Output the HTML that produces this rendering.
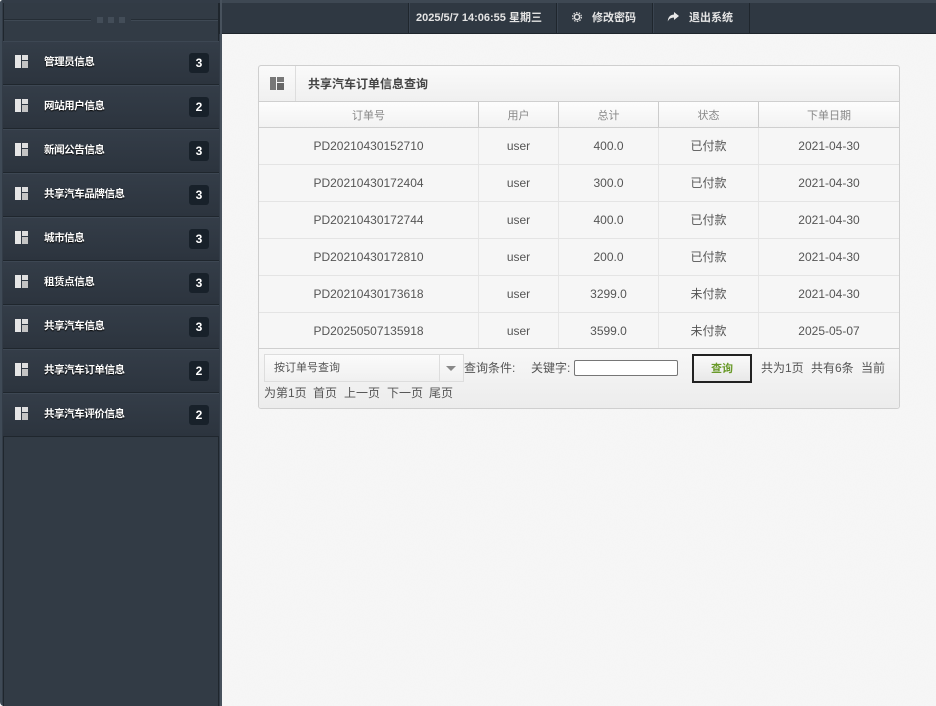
<!DOCTYPE html>
<html><head><meta charset="utf-8"><style>
*{box-sizing:border-box}
html,body{margin:0;padding:0}
body{width:936px;height:706px;position:relative;overflow:hidden;background:#f4f4f4;font-family:"Liberation Sans","Noto Sans CJK SC",sans-serif;font-size:12px;color:#555}
div,span.a{position:absolute}
.menu{left:3px;width:216px;height:44px;background:linear-gradient(#343d48,#2c343e);border-top:1px solid #3d4753;border-bottom:1px solid #1f262d}
.menu .t{left:41px;top:12px;color:#fff;font-size:10.5px;font-weight:bold;letter-spacing:-.42px;white-space:nowrap;text-shadow:0 1px 1px #000;line-height:16px}
.badge{left:186px;top:11px;width:20px;height:20px;border-radius:3px;background:#18212a;color:#fff;font-weight:bold;font-size:12px;text-align:center;line-height:21px}
.ic{width:13px;height:13px}
.ic i{position:absolute;background:#e6e6e6;display:block}
.ic .x{left:0;top:0;width:6px;height:13px}
.ic .y{left:7px;top:0;width:6px;height:5px;background:#dedede}
.ic .z{left:7px;top:6px;width:6px;height:7px;background:#c4c4c4}
.dark{width:14px;height:13px}
.dark i{background:#777}
.dark .y{width:7px;background:#777}.dark .z{width:7px;height:7px;background:#666}
.tb{border-left:1px solid #1f262d;box-shadow:inset 1px 0 0 #3a4450;top:3px;height:30px;color:#e4e4e4;font-size:11px;font-weight:bold;line-height:31px;white-space:nowrap}
.h{position:absolute;height:26px;top:102px;line-height:28px;color:#888;font-size:11px;text-align:center;border-right:1px solid #ccc;background:linear-gradient(#fdfdfd,#f2f2f2)}
.row{position:absolute;left:259px;width:640px;height:37px;border-bottom:1px solid #e4e4e4;background:#f6f6f6}
.row span{position:absolute;top:0;height:36px;line-height:36px;text-align:center;border-right:1px solid #e6e6e6;color:#555;white-space:nowrap}
.s1{left:0;width:220px}.s2{left:220px;width:80px}.s3{left:300px;width:100px}.s4{left:400px;width:100px}.s5{left:500px;width:140px;border-right:0!important}
.f{position:absolute;white-space:nowrap;line-height:16px;color:#555}
</style></head><body>
<div style="left:0;top:0;width:936px;height:34px;background:#2f3842;border-bottom:1px solid #1e252c;border-radius:3px 0 0 0"></div>
<div style="left:0;top:0;width:936px;height:3px;background:#3e4853;border-radius:3px 0 0 0"></div>
<div style="left:0;top:0;width:222px;height:706px;background:#333c47;border-left:2px solid #3f4a56;border-right:2px solid #48525d;border-radius:3px 0 0 4px"></div>
<div style="left:3px;top:3px;width:216px;height:703px;background:#323b45;border-left:1px solid #1f262d;border-right:1px solid #1f262d"></div>
<div style="left:219px;top:3px;width:1px;height:31px;background:#1f262d"></div>
<div style="left:4px;top:19px;width:87px;height:2px;background:#252d35;border-bottom:1px solid #3f4954"></div>
<div style="left:131px;top:19px;width:87px;height:2px;background:#252d35;border-bottom:1px solid #3f4954"></div>
<div style="left:97px;top:17px;width:6px;height:6px;background:#434d58"></div>
<div style="left:108px;top:17px;width:6px;height:6px;background:#434d58"></div>
<div style="left:119px;top:17px;width:6px;height:6px;background:#434d58"></div>

<div class="menu" style="top:41px"><div class="ic" style="left:12px;top:13px"><i class="x"></i><i class="y"></i><i class="z"></i></div><div class="t">管理员信息</div><div class="badge">3</div></div>
<div class="menu" style="top:85px"><div class="ic" style="left:12px;top:13px"><i class="x"></i><i class="y"></i><i class="z"></i></div><div class="t">网站用户信息</div><div class="badge">2</div></div>
<div class="menu" style="top:129px"><div class="ic" style="left:12px;top:13px"><i class="x"></i><i class="y"></i><i class="z"></i></div><div class="t">新闻公告信息</div><div class="badge">3</div></div>
<div class="menu" style="top:173px"><div class="ic" style="left:12px;top:13px"><i class="x"></i><i class="y"></i><i class="z"></i></div><div class="t">共享汽车品牌信息</div><div class="badge">3</div></div>
<div class="menu" style="top:217px"><div class="ic" style="left:12px;top:13px"><i class="x"></i><i class="y"></i><i class="z"></i></div><div class="t">城市信息</div><div class="badge">3</div></div>
<div class="menu" style="top:261px"><div class="ic" style="left:12px;top:13px"><i class="x"></i><i class="y"></i><i class="z"></i></div><div class="t">租赁点信息</div><div class="badge">3</div></div>
<div class="menu" style="top:305px"><div class="ic" style="left:12px;top:13px"><i class="x"></i><i class="y"></i><i class="z"></i></div><div class="t">共享汽车信息</div><div class="badge">3</div></div>
<div class="menu" style="top:349px"><div class="ic" style="left:12px;top:13px"><i class="x"></i><i class="y"></i><i class="z"></i></div><div class="t">共享汽车订单信息</div><div class="badge">2</div></div>
<div class="menu" style="top:393px"><div class="ic" style="left:12px;top:13px"><i class="x"></i><i class="y"></i><i class="z"></i></div><div class="t">共享汽车评价信息</div><div class="badge">2</div></div>

<div class="tb" style="left:408px;width:148px;padding-left:7px">2025/5/7 14:06:55 星期三</div>
<div class="tb" style="left:556px;width:96px;padding-left:35px">修改密码</div>
<div class="tb" style="left:652px;width:97px;padding-left:36px">退出系统</div>
<div style="left:749px;top:3px;width:1px;height:30px;background:#1f262d"></div>
<svg style="position:absolute;left:571px;top:11px" width="12" height="12" viewBox="0 0 12 12"><circle cx="6" cy="6" r="2.6" fill="none" stroke="#e0e0e0" stroke-width="1.5"/><circle cx="6" cy="6" r="4.4" fill="none" stroke="#d8d8d8" stroke-width="1.3" stroke-dasharray="1.5 1.3"/></svg>
<svg style="position:absolute;left:667px;top:11px" width="12" height="12" viewBox="0 0 12 12"><path d="M7 1l5 4-5 4V6.6C4 6.6 2 7.6 .8 10.5.8 6.5 3 3.8 7 3.5z" fill="#e8e8e8"/></svg>

<div style="left:222px;top:34px;width:714px;height:672px;background:#f7f7f7"></div>
<svg style="position:absolute;left:222px;top:34px" width="714" height="672"><filter id="n"><feTurbulence type="fractalNoise" baseFrequency="0.9" numOctaves="2"/><feColorMatrix values="0 0 0 0 0.6 0 0 0 0 0.6 0 0 0 0 0.6 0 0 0 0.07 0"/></filter><rect width="714" height="672" filter="url(#n)"/></svg>

<div style="left:258px;top:65px;width:642px;height:344px;background:#f3f3f3;border:1px solid #cfcfcf;border-radius:3px"></div>
<div style="left:259px;top:66px;width:640px;height:36px;background:linear-gradient(#fafafa,#f0f0f0);border-bottom:1px solid #cfcfcf;border-radius:3px 3px 0 0"></div>
<div style="left:295px;top:66px;width:1px;height:35px;background:#ddd"></div>
<div class="ic dark" style="left:270px;top:77px"><i class="x"></i><i class="y"></i><i class="z"></i></div>
<div style="left:308px;top:75px;color:#444;font-size:12px;font-weight:bold;line-height:18px;white-space:nowrap;letter-spacing:0">共享汽车订单信息查询</div>

<div style="left:259px;top:102px;width:640px;height:26px;background:#f5f5f5;border-bottom:1px solid #cfcfcf;z-index:1"></div>
<div class="h" style="left:259px;width:220px;z-index:2">订单号</div>
<div class="h" style="left:479px;width:80px;z-index:2">用户</div>
<div class="h" style="left:559px;width:100px;z-index:2">总计</div>
<div class="h" style="left:659px;width:100px;z-index:2">状态</div>
<div class="h" style="left:759px;width:140px;border-right:0;z-index:2">下单日期</div>
<div style="left:259px;top:127px;width:640px;height:1px;background:#cfcfcf;z-index:3"></div>

<div class="row" style="top:128px"><span class="s1">PD20210430152710</span><span class="s2">user</span><span class="s3">400.0</span><span class="s4">已付款</span><span class="s5">2021-04-30</span></div>
<div class="row" style="top:165px"><span class="s1">PD20210430172404</span><span class="s2">user</span><span class="s3">300.0</span><span class="s4">已付款</span><span class="s5">2021-04-30</span></div>
<div class="row" style="top:202px"><span class="s1">PD20210430172744</span><span class="s2">user</span><span class="s3">400.0</span><span class="s4">已付款</span><span class="s5">2021-04-30</span></div>
<div class="row" style="top:239px"><span class="s1">PD20210430172810</span><span class="s2">user</span><span class="s3">200.0</span><span class="s4">已付款</span><span class="s5">2021-04-30</span></div>
<div class="row" style="top:276px"><span class="s1">PD20210430173618</span><span class="s2">user</span><span class="s3">3299.0</span><span class="s4">未付款</span><span class="s5">2021-04-30</span></div>
<div class="row" style="top:313px;height:36px;border-bottom:1px solid #cfcfcf"><span class="s1" style="height:35px;line-height:37px">PD20250507135918</span><span class="s2" style="height:35px;line-height:37px">user</span><span class="s3" style="height:35px;line-height:37px">3599.0</span><span class="s4" style="height:35px;line-height:37px">未付款</span><span class="s5" style="height:35px;line-height:37px">2025-05-07</span></div>

<div style="left:259px;top:349px;width:640px;height:59px;background:linear-gradient(#f7f7f7,#ececec);border-radius:0 0 3px 3px"></div>
<div style="left:264px;top:354px;width:200px;height:28px;background:linear-gradient(#fbfbfb,#f0f0f0);border:1px solid #ddd"></div>
<div style="left:439px;top:355px;width:1px;height:26px;background:#ddd"></div>
<div style="left:446px;top:366px;width:0;height:0;border-left:5px solid transparent;border-right:5px solid transparent;border-top:5px solid #888"></div>
<div class="f" style="left:274px;top:360px;font-size:11px">按订单号查询</div>
<div class="f" style="left:464px;top:360px">查询条件:</div>
<div class="f" style="left:531px;top:360px">关键字:</div>
<div style="left:574px;top:360px;width:104px;height:16px;background:#fff;border:1px solid #767676;border-radius:2px"></div>
<div style="left:692px;top:354px;width:60px;height:29px;background:linear-gradient(#fafafa,#e8e8e8);border:2px solid #222;text-align:center;line-height:27px;font-size:11px;font-weight:bold;color:#6a9a2a">查询</div>
<div class="f" style="left:761px;top:360px">共为1页</div>
<div class="f" style="left:811px;top:360px">共有6条</div>
<div class="f" style="left:861px;top:360px">当前</div>
<div class="f" style="left:264px;top:385px">为第1页</div>
<div class="f" style="left:313px;top:385px">首页</div>
<div class="f" style="left:344px;top:385px">上一页</div>
<div class="f" style="left:387px;top:385px">下一页</div>
<div class="f" style="left:429px;top:385px">尾页</div>
</body></html>
